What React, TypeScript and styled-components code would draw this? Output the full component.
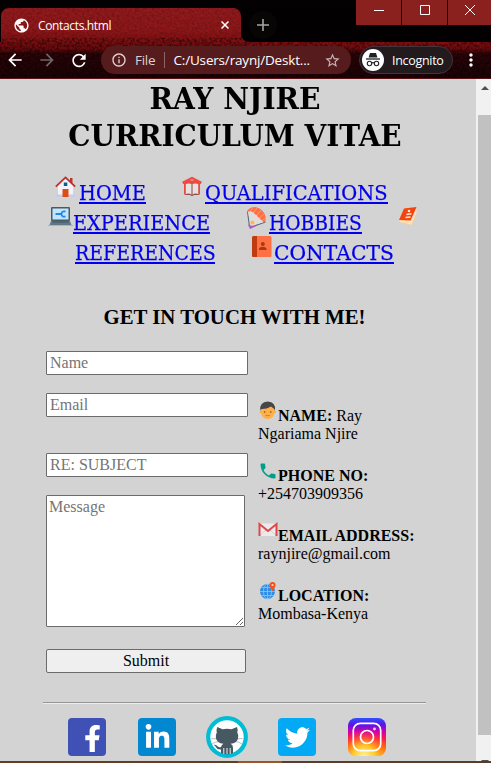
import React from 'react';
import styled, { createGlobalStyle } from 'styled-components';
import { FaFacebookF, FaLinkedinIn, FaTwitter } from 'react-icons/fa';
import {
  MdArrowBack, MdArrowForward, MdRefresh, MdInfoOutline, MdStarBorder, MdPublic, MdPhone, MdMoreVert,
} from 'react-icons/md';

const GlobalStyle = createGlobalStyle`
  * { box-sizing: border-box; }
  html, body { margin: 0; padding: 0; overflow: hidden; background: #d3d3d3; }
`;

const uiFont = '"Open Sans", "Noto Sans", sans-serif';
const serif = '"Liberation Serif", "Times New Roman", serif';
const slab = 'Rockwell, "DejaVu Serif", serif';

const Window = styled.div`
  display: flex;
  flex-direction: column;
  width: 491px;
  height: 763px;
  overflow: hidden;
  background: #d3d3d3;
  font-family: ${serif};
  font-size: 16px;
  color: #000;
`;

/* Browser chrome */
const Chrome = styled.header`
  position: relative;
  height: 79px;
  flex: none;
  background: #030102;
  font-family: ${uiFont};
  color: #fff;
`;
const Texture = styled.svg`
  position: absolute;
  inset: 0;
  display: block;
`;
const TabStrip = styled.div`
  position: relative;
  display: flex;
  height: 42px;
`;
const Tab = styled.div`
  display: flex;
  align-items: center;
  width: 240px;
  height: 34px;
  margin: 8px 0 0 1px;
  padding: 0 12px 0 12px;
`;
const TabTitle = styled.span`
  flex: 1;
  margin-left: 8px;
  font-size: 12px;
  letter-spacing: -0.35px;
`;
const NewTab = styled.div`
  display: grid;
  place-items: center;
  width: 28px;
  height: 28px;
  margin: 11px 0 0 8px;
  border-radius: 50%;
  background: #080505;
`;
const WindowButtons = styled.div`
  display: flex;
  gap: 1px;
  margin-left: auto;
  height: 25px;
`;
const WindowButton = styled.div<{ $w: number }>`
  display: grid;
  place-items: center;
  width: ${(p) => p.$w}px;
  height: 25px;
  padding-bottom: 5px;
  background: #8b211f;
`;
const Toolbar = styled.div`
  position: relative;
  display: flex;
  align-items: center;
  height: 36px;
  padding-left: 5px;
`;
const NavIcon = styled.span<{ $dim?: boolean }>`
  display: flex;
  width: 20px;
  margin-right: 12px;
  color: ${(p) => (p.$dim ? '#6f6667' : '#fff')};
`;
const Address = styled.div`
  display: flex;
  align-items: center;
  width: 250px;
  height: 28px;
  padding: 0 10px;
  border-radius: 14px;
  background: #561b1d;
  font-size: 13.5px;
  white-space: nowrap;
`;
const Scheme = styled.span`
  margin-left: 8px;
  width: 20.5px;
  color: #dccfd0;
  letter-spacing: -0.3px;
`;
const Divider = styled.span`
  width: 1px;
  height: 16px;
  margin: 0 9px 0 8px;
  background: #8d6668;
`;
const Url = styled.span`
  flex: 1;
  letter-spacing: -0.18px;
`;
const Incognito = styled.div`
  display: flex;
  align-items: center;
  width: 94px;
  height: 28px;
  margin: 0 8px 0 8px;
  padding-left: 2px;
  border: 1px solid #443338;
  border-radius: 14px;
  background: #231a1e;
  font-size: 12.5px;
  letter-spacing: -0.3px;
`;
const IncognitoLabel = styled.span`
  margin-left: 8px;
`;

/* Page */
const Viewport = styled.div`
  display: flex;
  height: 682px;
`;
const Page = styled.main`
  flex: none;
  width: 476px;
  height: 682px;
  overflow: hidden;
`;
const Title = styled.h1`
  width: 470px;
  height: 74px;
  margin: 0;
  padding-top: 1px;
  font: bold 30px/37px ${slab};
  text-align: center;
  white-space: nowrap;
`;
const TitleLine = styled.span<{ $scale: number }>`
  display: block;
  transform: scaleX(${(p) => p.$scale});
`;
const Nav = styled.nav`
  margin-top: 23px;
  height: 90px;
`;
const NavRow = styled.div<{ $indent: number }>`
  display: flex;
  height: 30px;
  padding-left: ${(p) => p.$indent}px;
`;
const NavItem = styled.div<{ $gap?: number }>`
  display: flex;
  margin-left: ${(p) => p.$gap ?? 0}px;
`;
const NavLink = styled.a<{ $w: number; $scale: number; $ml?: number }>`
  display: block;
  width: ${(p) => p.$w}px;
  margin-left: ${(p) => p.$ml ?? 3}px;
  margin-top: 3px;
  height: 25px;
  border-bottom: 2px solid #0000ee;
  color: #0000ee;
  font: 21px/29px ${slab};
  text-decoration: none;
  white-space: nowrap;
  & > span {
    display: inline-block;
    transform: scaleX(${(p) => p.$scale});
    transform-origin: 0 0;
    -webkit-text-stroke: 0.25px #0000ee;
  }
`;
const Heading = styled.h2`
  width: 469px;
  margin: 38px 0 0;
  font: bold 20.8px/25px ${serif};
  text-align: center;
`;
const Columns = styled.div`
  display: flex;
  height: 322px;
  margin: 22px 0 0 46px;
`;
const Form = styled.form`
  display: flex;
  flex-direction: column;
  width: 212px;
`;
const Field = styled.input<{ $mb: number }>`
  width: 202px;
  height: 24px;
  margin: 0 0 ${(p) => p.$mb}px;
  padding: 1px 3px;
  border: 1px solid #6b6b6b;
  border-radius: 1px;
  background: #fff;
  font: 16px/18px ${serif};
  &::placeholder { color: #757575; opacity: 1; }
`;
const Message = styled.textarea`
  width: 199px;
  height: 132px;
  margin: 0 0 22px;
  padding: 2px;
  border: 1px solid #6b6b6b;
  border-radius: 1px;
  background: #fff;
  font: 16px/18px ${serif};
  &::placeholder { color: #757575; opacity: 1; }
`;
const Submit = styled.button`
  width: 200px;
  height: 24px;
  padding: 0;
  border: 1px solid #6b6b6b;
  border-radius: 2px;
  background: #efefef;
  font: 16px/18px ${serif};
  color: #000;
`;
const Details = styled.div`
  display: flex;
  flex-direction: column;
  padding-top: 50px;
`;
const Detail = styled.div`
  height: 60px;
  line-height: 18px;
  white-space: nowrap;
`;
const DetailTop = styled.div`
  display: flex;
  height: 24px;
  & > svg { flex: none; }
  & > span { padding-top: 6px; }
`;
const DetailLine = styled.div``;
const Rule = styled.hr`
  width: 383px;
  height: 2px;
  margin: 29px 0 0 43px;
  border: 0;
  border-top: 1px solid #969696;
  border-bottom: 1px solid #ededed;
`;
const Socials = styled.div`
  display: flex;
  align-items: center;
  height: 42px;
  margin: 12px 0 0 68px;
`;
const Social = styled.div<{ $bg: string; $mr: number }>`
  display: flex;
  align-items: center;
  justify-content: center;
  width: 38px;
  height: 38px;
  margin-right: ${(p) => p.$mr}px;
  border-radius: 4px;
  background: ${(p) => p.$bg};
  color: #fff;
  overflow: hidden;
`;
const FacebookMark = styled(FaFacebookF)`
  margin: 3px 0 0 10px;
`;
const OctoWrap = styled.div`
  width: 42px;
  height: 42px;
  margin-right: 30px;
`;

const ScrollBar = styled.div`
  display: flex;
  flex-direction: column;
  width: 15px;
  height: 682px;
  overflow: hidden;
  background: #f1f1f1;
`;
const ScrollArrow = styled.div<{ $down?: boolean }>`
  flex: none;
  width: 0;
  margin: ${(p) => (p.$down ? '25px 0 0 5px' : '7px 0 0 5px')};
  border: 4px solid transparent;
  border-top-width: ${(p) => (p.$down ? 4 : 0)}px;
  border-bottom-width: ${(p) => (p.$down ? 0 : 4)}px;
  border-bottom-color: ${(p) => (p.$down ? 'transparent' : '#505050')};
  border-top-color: ${(p) => (p.$down ? '#505050' : 'transparent')};
`;
const ScrollThumb = styled.div`
  flex: none;
  width: 13px;
  height: 620px;
  margin: 25px 0 0 2px;
  background: #c1c1c1;
`;
const Desktop = styled.div`
  height: 2px;
  background: linear-gradient(90deg, #633d27 0 238px, #9b5528 238px 282px, #593c2a 282px);
`;

const ChromeTexture = () => (
  <Texture width="491" height="79" viewBox="0 0 491 79">
    <defs>
      <linearGradient id="tab" x1="0" y1="8" x2="0" y2="52" gradientUnits="userSpaceOnUse">
        <stop offset="0" stopColor="#921a1c" />
        <stop offset=".5" stopColor="#8e1719" />
        <stop offset=".78" stopColor="#7c0e10" />
        <stop offset="1" stopColor="#5c080a" />
      </linearGradient>
      <linearGradient id="bar" x1="0" y1="42" x2="0" y2="79" gradientUnits="userSpaceOnUse">
        <stop offset="0" stopColor="#860f11" />
        <stop offset=".18" stopColor="#6e0b0d" />
        <stop offset=".32" stopColor="#2c0407" />
        <stop offset="1" stopColor="#1c0306" />
      </linearGradient>
      <filter id="grain" x="0" y="0" width="100%" height="100%">
        <feTurbulence type="fractalNoise" baseFrequency=".4" numOctaves="3" seed="7" />
        <feColorMatrix values="0 0 0 0 0  0 0 0 0 0  0 0 0 0 0  2.2 0 0 0 -.8" />
      </filter>
    </defs>
    <rect y="42" width="491" height="37" fill="url(#bar)" />
    <path d="M1 50V16a8 8 0 0 1 8-8h224a8 8 0 0 1 8 8v18a8 8 0 0 0 8 8v4H110q-8 4-20 4z" fill="url(#tab)" />
    <rect y="8" width="491" height="30" filter="url(#grain)" opacity=".22" />
    <rect y="38" width="491" height="41" filter="url(#grain)" opacity=".6" />
    <rect y="78" width="491" height="1" fill="#561416" />
  </Texture>
);

const HomeIcon = () => (
  <svg width="21" height="22" viewBox="0 0 21 22">
    <path d="M15 2h2.500v5H15z" fill="#b5382c" />
    <path d="M3 10l7.500-7L18 10v10H3z" fill="#f1f3f8" />
    <path d="M1 18.500h19V21H1z" fill="#c9cbe8" />
    <path d="M7.500 13h6v8h-6z" fill="#dd4b17" />
    <rect x="8.800" y="6.500" width="3.500" height="3.500" fill="#0b5c94" />
    <path d="M.8 10.700L10.500 1.500l9.700 9.200" fill="none" stroke="#bd3029" strokeWidth="1.700" />
  </svg>
);
const BookHouseIcon = () => (
  <svg width="20" height="22" viewBox="0 0 20 22">
    <path d="M2 7l8-5.500L18 7v11.500H2z" fill="#ea4a43" />
    <path d="M3.800 8Q7 7 10 8.200 13 7 16.200 8v10Q13 17 10 18.500 7 17 3.800 18z" fill="#e6e2e1" />
    <path d="M10 8v11M3.500 18.500q4-.8 6.500 1 2.500-1.800 6.500-1" stroke="#8d4743" fill="none" />
    <path d="M.7 7L10 2.200 19.300 7" fill="none" stroke="#ed4b43" strokeWidth="2.600" />
    <path d="M8.500 4h3" stroke="#f8b7af" />
  </svg>
);
const LaptopIcon = () => (
  <svg width="25" height="22" viewBox="0 0 25 22">
    <rect x="3" y="1" width="19" height="14" rx="1" fill="#465b66" />
    <rect x="4.500" y="2.500" width="16" height="11" fill="#c1e6fb" />
    <path d="M7.500 8H14" stroke="#2188e4" strokeWidth="2" />
    <path d="M17.500 5.500q-4-.8-4 2.500t4 2.500" stroke="#2188e4" strokeWidth="1.800" fill="none" />
    <path d="M3 15h19l1.500 4h-22z" fill="#617986" />
    <path d="M4.500 16h16" stroke="#3f535e" />
    <path d="M0 19.500h25" stroke="#a3b8c3" />
  </svg>
);
const ParachuteIcon = () => (
  <svg width="22" height="24" viewBox="0 0 22 24">
    <path d="M1.500 5.500l2 15.500M19.500 16L4 21.500" stroke="#596d78" strokeWidth="1.100" fill="none" />
    <path d="M2 6q5-1 9 3t7 7L5 20z" fill="#e0dedd" />
    <path d="M1 5C5-.5 11 .2 15 3.500c4 3.500 6 8.500 4 12.500-1.500.8-2.300-.3-2.700-1.700-1.500 0-2.300-1.300-2.500-2.600-1.500 0-2.500-1-2.800-2.700C9.300 9 8.300 8 8 6.300 6.500 6.500 5.700 6 5 4.700 3.500 5 2.300 6 1 5z" fill="#ff7043" />
    <path d="M5 4.500L7 1.500M8 6.300l3-4.500M11 9l4-5M13.800 11.700l4.500-4M16.300 14.300l3.700-2" stroke="#f2a58d" strokeWidth=".8" />
    <path d="M2 18.500l2.500 1 4 .5 2-1.500.5 1.200L4 23z" fill="#ae5ac3" />
    <circle cx="6.500" cy="16.500" r="1.900" fill="#ffb74d" />
  </svg>
);
const ReferenceBookIcon = () => (
  <svg width="20" height="22" viewBox="0 0 20 22">
    <path d="M1 13l12 4 5.500-13v4l-5 11.500L2 16z" fill="#f2c48e" />
    <path d="M1 14h11l1 1.500L18.500 3v4l-5 12L2 16z" fill="#ffe0b2" />
    <path d="M6 2.500l12.500-1.500-6 13.500-11.500-.5z" fill="#f4430c" />
    <circle cx="11" cy="5" r="1.300" fill="#ffe6dc" />
    <path d="M8.500 8.500l5-.8M7.500 11.500l5-.5" stroke="#ffe6dc" strokeWidth="1.400" fill="none" />
  </svg>
);
const ContactsIcon = () => (
  <svg width="20" height="22" viewBox="0 0 20 22">
    <rect y="0" width="19.500" height="21" rx="1.500" fill="#ff7043" />
    <path d="M1.500 0H5v21H1.500Q0 21 0 19.500v-18Q0 0 1.500 0z" fill="#bf3b12" />
    <circle cx="10.800" cy="8" r="2" fill="#a83817" />
    <path d="M7 14v-1.500q1-1.800 3.800-1.800t3.700 1.800V14z" fill="#a83817" />
  </svg>
);
const PersonIcon = () => (
  <svg width="20" height="20" viewBox="0 0 20 20">
    <circle cx="3" cy="11" r="1.300" fill="#ffa726" /><circle cx="16.500" cy="11" r="1.300" fill="#ffa726" />
    <path d="M3 7q0-5 6.700-5t6.800 5v4q-.5 7-6.800 7T3 11z" fill="#ffb04a" />
    <path d="M2.200 9.500Q1.500.8 9.700.5q8.200.3 7.300 9L16 7.800 13 5.500Q8.500 8.200 3.500 8z" fill="#464547" />
    <circle cx="6.700" cy="11" r=".8" fill="#704a27" /><circle cx="12.800" cy="11" r=".8" fill="#704a27" />
    <path d="M7.500 14.300q2.300 1 4.500 0" stroke="#d77e22" fill="none" />
  </svg>
);
const MailIcon = () => (
  <svg width="20" height="20" viewBox="0 0 20 20">
    <path d="M1.500 2.500h17V15h-17z" fill="#eceaea" />
    <path d="M2 14.500L8 9m10 5.500L12 9" stroke="#d5d1d1" />
    <path d="M1.500 15V3l8.500 7 8.500-7v12" fill="none" stroke="#df464a" strokeWidth="2" />
  </svg>
);
const LocationIcon = () => (
  <svg width="20" height="20" viewBox="0 0 20 20">
    <circle cx="9.500" cy="10.500" r="7.500" fill="#2e8de4" />
    <path d="M2 10.500h15M3.500 6.500h12M3.500 14.500h12M9.500 3v15" stroke="#8dc5f3" strokeWidth=".8" />
    <ellipse cx="9.500" cy="10.500" rx="4" ry="7.500" fill="none" stroke="#8dc5f3" strokeWidth=".8" />
    <path d="M14.500 10Q11.500 6 11.500 4a3 3 0 0 1 6 0q0 2-3 6z" fill="#f4511e" />
    <circle cx="14.500" cy="4" r="1.100" fill="#fbd5c8" />
  </svg>
);
const OctocatIcon = () => (
  <svg width="42" height="42" viewBox="0 0 42 42">
    <circle cx="21" cy="21" r="18.800" fill="#fff" stroke="#00bcd4" strokeWidth="4.200" />
    <path d="M5.500 22.500l7 .5m-6.500 5q3-2.500 7-2.500M36.500 22.500l-7 .5m6.500 5q-3-2.500-7-2.500" stroke="#b5bfc4" fill="none" />
    <path d="M11.300 11l5.200 2.300q4.500-1 9 0L31 11q1.200 3 .3 5.500 1.500 2.500.8 5.500-.8 5.300-7.500 5.800 2.400 1.200 2.400 4V37q-1.500 1.200-6 1.200-4.300 0-6-1.200v-3.500q-4 .2-5-2.200-.8-1.800-2.500-2.500 2.800-.7 4 1.400 1.200 1.600 3.500 1 .2-2.200 2.400-3.400-6.500-.8-7.500-5.800-.5-3 .9-5.500-.8-2.500.5-5.500z" fill="#465963" />
    <path d="M17.800 32v6m3.200-6v6m3.200-6v6" stroke="#fff" strokeWidth=".9" />
  </svg>
);
const InstagramIcon = () => (
  <svg width="38" height="38" viewBox="0 0 38 38">
    <defs>
      <linearGradient id="igBase" x1="0" y1="0" x2="0" y2="1">
        <stop offset="0" stopColor="#304ffe" />
        <stop offset=".18" stopColor="#5a14e8" />
        <stop offset=".36" stopColor="#d500a8" />
        <stop offset=".55" stopColor="#ff1744" />
        <stop offset=".8" stopColor="#ff6d00" />
        <stop offset="1" stopColor="#ffb028" />
      </linearGradient>
      <radialGradient id="igGlow" cx=".42" cy="1" r=".7">
        <stop offset="0" stopColor="#fff3a0" />
        <stop offset=".4" stopColor="#ffd52e" stopOpacity=".85" />
        <stop offset="1" stopColor="#ff5722" stopOpacity="0" />
      </radialGradient>
    </defs>
    <rect width="38" height="38" rx="8" fill="url(#igBase)" />
    <rect width="38" height="38" rx="8" fill="url(#igGlow)" />
    <rect x="5.300" y="5.300" width="27.400" height="27.400" rx="7" fill="none" stroke="#fff" strokeWidth="1.700" />
    <circle cx="19" cy="19" r="6.500" fill="none" stroke="#fff" strokeWidth="1.700" />
    <circle cx="26.500" cy="11" r="1.400" fill="#ffc4ff" />
  </svg>
);
const IncognitoIcon = () => (
  <svg width="22" height="22" viewBox="0 0 22 22">
    <circle cx="11" cy="11" r="11" fill="#fff" />
    <path d="M8 4h6l1.400 4.500H6.600z" fill="#202124" />
    <path d="M4 10h14" stroke="#202124" strokeWidth="1.300" />
    <g fill="none" stroke="#202124" strokeWidth="1.100">
      <circle cx="7.500" cy="14.500" r="2.200" /><circle cx="14.500" cy="14.500" r="2.200" /><path d="M9.700 14q1.300-.8 2.600 0" />
    </g>
  </svg>
);

export default function App() {
  return (
    <Window>
      <GlobalStyle />
      <Chrome>
        <ChromeTexture />
        <TabStrip>
          <Tab>
            <MdPublic size={17} />
            <TabTitle>Contacts.html</TabTitle>
            <svg width="8" height="8" viewBox="0 0 8 8"><path d="M.5.5l7 7m0-7l-7 7" stroke="#fff" strokeWidth="1.500" /></svg>
          </Tab>
          <NewTab>
            <svg width="12" height="12" viewBox="0 0 12 12"><path d="M6 0v12M0 6h12" stroke="#a9a3a3" strokeWidth="1.600" /></svg>
          </NewTab>
          <WindowButtons>
            <WindowButton $w={45}><svg width="10" height="10"><path d="M0 5.500h10" stroke="#fff" /></svg></WindowButton>
            <WindowButton $w={45}><svg width="10" height="10"><path d="M.5.5h9v9h-9z" stroke="#fff" fill="none" /></svg></WindowButton>
            <WindowButton $w={43}><svg width="10" height="10"><path d="M0 0l10 10M10 0L0 10" stroke="#fff" /></svg></WindowButton>
          </WindowButtons>
        </TabStrip>
        <Toolbar>
          <NavIcon><MdArrowBack size={20} /></NavIcon>
          <NavIcon $dim><MdArrowForward size={20} /></NavIcon>
          <NavIcon><MdRefresh size={21} /></NavIcon>
          <Address>
            <MdInfoOutline size={16} color="#e4d5d5" />
            <Scheme>File</Scheme>
            <Divider />
            <Url>C:/Users/raynj/Deskt...</Url>
            <MdStarBorder size={17} color="#c8b4b5" />
          </Address>
          <Incognito>
            <IncognitoIcon />
            <IncognitoLabel>Incognito</IncognitoLabel>
          </Incognito>
          <MdMoreVert size={20} />
        </Toolbar>
      </Chrome>
      <Viewport>
        <Page>
          <Title>
            <TitleLine $scale={0.94}>RAY NJIRE</TitleLine>
            <TitleLine $scale={0.933}>CURRICULUM VITAE</TitleLine>
          </Title>
          <Nav>
            <NavRow $indent={55}>
              <NavItem><HomeIcon /><NavLink href="#" $w={67} $scale={0.925}><span>HOME</span></NavLink></NavItem>
              <NavItem $gap={36}><BookHouseIcon /><NavLink href="#" $w={183} $scale={0.927}><span>QUALIFICATIONS</span></NavLink></NavItem>
            </NavRow>
            <NavRow $indent={48}>
              <NavItem><LaptopIcon /><NavLink href="#" $w={137} $scale={0.92} $ml={0}><span>EXPERIENCE</span></NavLink></NavItem>
              <NavItem $gap={36}><ParachuteIcon /><NavLink href="#" $w={93} $scale={0.89} $ml={1}><span>HOBBIES</span></NavLink></NavItem>
              <NavItem $gap={36}><ReferenceBookIcon /></NavItem>
            </NavRow>
            <NavRow $indent={75}>
              <NavItem><NavLink href="#" $w={140} $scale={0.9} $ml={0}><span>REFERENCES</span></NavLink></NavItem>
              <NavItem $gap={37}><ContactsIcon /><NavLink href="#" $w={120} $scale={0.965} $ml={2}><span>CONTACTS</span></NavLink></NavItem>
            </NavRow>
          </Nav>
          <Heading>GET IN TOUCH WITH ME!</Heading>
          <Columns>
            <Form>
              <Field $mb={18} placeholder="Name" />
              <Field $mb={36} placeholder="Email" />
              <Field $mb={18} placeholder="RE: SUBJECT" />
              <Message placeholder="Message" />
              <Submit type="button">Submit</Submit>
            </Form>
            <Details>
              <Detail>
                <DetailTop><PersonIcon /><span><b>NAME:</b> Ray</span></DetailTop>
                <DetailLine>Ngariama Njire</DetailLine>
              </Detail>
              <Detail>
                <DetailTop><MdPhone size={20} color="#009e88" /><span><b>PHONE NO:</b></span></DetailTop>
                <DetailLine>+254703909356</DetailLine>
              </Detail>
              <Detail>
                <DetailTop><MailIcon /><span><b>EMAIL ADDRESS:</b></span></DetailTop>
                <DetailLine>raynjire@gmail.com</DetailLine>
              </Detail>
              <Detail>
                <DetailTop><LocationIcon /><span><b>LOCATION:</b></span></DetailTop>
                <DetailLine>Mombasa-Kenya</DetailLine>
              </Detail>
            </Details>
          </Columns>
          <Rule />
          <Socials>
            <Social $bg="#3f51b5" $mr={32}><FacebookMark size={27} /></Social>
            <Social $bg="#0288d1" $mr={30}><FaLinkedinIn size={27} /></Social>
            <OctoWrap><OctocatIcon /></OctoWrap>
            <Social $bg="#03a9f4" $mr={32}><FaTwitter size={25} /></Social>
            <Social $bg="transparent" $mr={0}><InstagramIcon /></Social>
          </Socials>
        </Page>
        <ScrollBar>
          <ScrollArrow />
          <ScrollThumb />
          <ScrollArrow $down />
        </ScrollBar>
      </Viewport>
      <Desktop />
    </Window>
  );
}
